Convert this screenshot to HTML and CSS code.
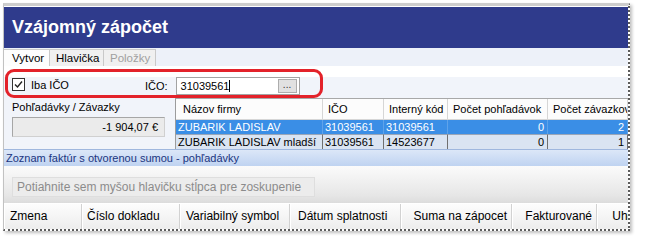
FILE: index.html
```html
<!DOCTYPE html>
<html lang="sk">
<head>
    <meta charset="UTF-8">
    <meta name="viewport" content="width=device-width, initial-scale=1.0">
    <title>Vzájomný zápočet</title>
    <link rel="stylesheet" href="styles.css">
</head>
<body>
    <div class="shot">
        <div class="titlebar">Vzájomný zápočet</div>

        <div class="tabs">
            <span class="tab active">Vytvor</span>
            <span class="tab">Hlavička</span>
            <span class="tab disabled">Položky</span>
        </div>

        <div class="form">
            <div class="filter">
                <label class="check">
                    <span class="box">
                        <svg width="11" height="11" viewBox="0 0 11 11">
                            <path d="M2 5.5 L4.5 8 L9 2.5" fill="none" stroke="#222" stroke-width="1.4"/>
                        </svg>
                    </span>
                    Iba IČO
                </label>
                <span class="ico-label">IČO:</span>
                <div class="input">
                    <span class="value">31039561</span><span class="caret"></span>
                    <span class="dots">...</span>
                </div>
            </div>

            <div class="lower">
                <div class="balance">
                    <div class="balance-label">Pohľadávky / Závazky</div>
                    <div class="balance-box">-1 904,07 €</div>
                </div>

                <div class="firms">
                    <div class="head">Názov firmy</div>
                    <div class="head">IČO</div>
                    <div class="head">Interný kód</div>
                    <div class="head">Počet pohľadávok</div>
                    <div class="head">Počet závazkov</div>

                    <div class="cell sel">ZUBARIK LADISLAV</div>
                    <div class="cell sel">31039561</div>
                    <div class="cell sel">31039561</div>
                    <div class="cell sel num">0</div>
                    <div class="cell sel num">2</div>

                    <div class="cell alt">ZUBARIK LADISLAV mladší</div>
                    <div class="cell alt">31039561</div>
                    <div class="cell alt">14523677</div>
                    <div class="cell alt num">0</div>
                    <div class="cell alt num">1</div>
                </div>
            </div>
        </div>

        <div class="band">Zoznam faktúr s otvorenou sumou - pohľadávky</div>

        <div class="group">
            <div class="group-box">Potiahnite sem myšou hlavičku stĺpca pre zoskupenie</div>
        </div>

        <div class="cols">
            <div class="col c-zmena">Zmena</div>
            <div class="col c-cislo">Číslo dokladu</div>
            <div class="col c-vs">Variabilný symbol</div>
            <div class="col c-datum">Dátum splatnosti</div>
            <div class="col c-suma right">Suma na zápocet</div>
            <div class="col c-fakt right">Fakturované</div>
            <div class="col c-uhr right">Uhradené</div>
        </div>

        <!-- cervene oznacenie -->
        <div class="mark"></div>
    </div>
</body>
</html>
```

FILE: styles.css
```css
body {
    margin: 0;
    padding: 0;
    background: #fff;
    width: 648px;
    height: 245px;
    overflow: hidden;
    font-family: 'Liberation Sans', Arial, sans-serif;
}

.shot {
    position: relative;
    width: 624px;
    margin: 3px 0 0 3px;
    padding-top: 1px;
    border-top: 3px solid #cdcdcd;
    border-left: 1px solid #c2c2c2;
    border-right: 2px dotted #5c5c5c;
    border-bottom: 2px dotted #5c5c5c;
    background: #fff;
    box-shadow: 2px 2px 3px rgba(0,0,0,0.25);
    font-size: 11px;
    color: #000;
    overflow: hidden;
}

.titlebar {
    height: 41px;
    line-height: 41px;
    padding-left: 8px;
    background: #2f3b8c;
    color: #fff;
    font-size: 18px;
    font-weight: bold;
}

.tabs {
    display: flex;
    height: 18px;
    padding-top: 1px;
    box-sizing: border-box;
    background: #edf1f9;
}

.tab {
    box-sizing: border-box;
    height: 17px;
    line-height: 16px;
    font-size: 11.5px;
    background: #f0f0f0;
    border: 1px solid #c9c9c9;
    border-bottom: none;
    border-left: none;
}

.tab:nth-child(1) { width: 46px; padding-left: 8px; }
.tab:nth-child(2) { width: 54px; padding-left: 6px; }
.tab:nth-child(3) { width: 52px; padding-left: 6px; }

.tab.active {
    background: #fdfdfd;
}

.tab.disabled {
    color: #a0a0a0;
}

.form {
    background: #f1f4fa;
}

.filter {
    display: flex;
    align-items: center;
    height: 18px;
    margin-top: 11px;
    margin-bottom: 3px;
    padding-left: 8px;
}

.check {
    display: flex;
    align-items: center;
    margin-top: -3px;
}

.box {
    display: flex;
    align-items: center;
    justify-content: center;
    width: 13px;
    height: 13px;
    box-sizing: border-box;
    border: 1px solid #333;
    background: #fff;
    margin-right: 6px;
}

.ico-label {
    margin-left: 76px;
    margin-top: -1px;
}

.input {
    display: flex;
    align-items: center;
    width: 124px;
    height: 18px;
    box-sizing: border-box;
    margin-left: 8px;
    padding-left: 4px;
    background: #fff;
    border: 1px solid #a3a3a3;
}

.caret {
    width: 1px;
    height: 12px;
    background: #000;
    margin-left: 0;
}

.dots {
    margin-left: auto;
    margin-right: 2px;
    width: 19px;
    height: 14px;
    box-sizing: border-box;
    background: #e1e1e1;
    border: 1px solid #adadad;
    text-align: center;
    line-height: 10px;
    font-size: 10px;
    color: #333;
}

.lower {
    display: flex;
    height: 51px;
}

.balance {
    width: 171px;
    box-sizing: border-box;
    padding: 3px 0 0 8px;
}

.balance-label {
    line-height: 13px;
}

.balance-box {
    width: 153px;
    height: 20px;
    box-sizing: border-box;
    margin-top: 3px;
    padding-right: 6px;
    line-height: 18px;
    text-align: right;
    background: #ebebeb;
    border: 1px solid #a6a6a6;
    border-right-color: #d0d0d0;
    border-bottom-color: #d0d0d0;
}

.firms {
    flex: 1;
    display: grid;
    grid-template-columns: 147px 61px 64px 100px 1fr;
    grid-template-rows: 21px 14px 15px;
    border-left: 1px solid #9c9c9c;
    border-top: 1px solid #a8a8a8;
    white-space: nowrap;
    overflow: hidden;
}

.head {
    background: #fcfcfc;
    border-right: 1px solid #d6d6d6;
    border-bottom: 1px solid #d6d6d6;
    line-height: 20px;
    padding-left: 5px;
    overflow: hidden;
}

.head:first-child {
    padding-left: 7px;
}

.cell {
    line-height: 14px;
    padding-left: 2px;
    overflow: hidden;
}

.cell.num {
    text-align: right;
    padding-right: 3px;
}

.sel {
    background: #3a8ee6;
    color: #fff;
    border-right: 1px solid #5fa3ea;
}

.alt {
    background: #dae4f2;
    border-right: 1px solid #707070;
    border-top: 1px solid #9aa6b8;
}

.band {
    height: 17px;
    box-sizing: border-box;
    line-height: 16px;
    padding-left: 2px;
    color: #1b3580;
    background: linear-gradient(#dce7f8, #bfd3f1);
    border-top: 1px solid #9fb7de;
}

.group {
    height: 37px;
    box-sizing: border-box;
    padding: 11px 0 0 8px;
    background: linear-gradient(#fbfbfb, #e6e6e6 80%, #dcdcdc);
}

.group-box {
    width: 303px;
    height: 20px;
    box-sizing: border-box;
    padding-left: 4px;
    line-height: 18px;
    font-size: 12px;
    color: #8b8b8b;
    background: #ececec;
    border: 1px solid #dedede;
}

.cols {
    display: flex;
    height: 25px;
    font-size: 12px;
    line-height: 25px;
    white-space: nowrap;
    background: linear-gradient(#fdfdfd, #ededed);
    border-top: 1px solid #fff;
}

.col {
    flex: none;
    box-sizing: border-box;
    padding-left: 6px;
    border-right: 1px solid #d2d2d2;
    box-shadow: inset 1px 0 0 #fff;
}

.col.right {
    text-align: right;
    padding-left: 0;
    padding-right: 4px;
}

.c-zmena { width: 78px; }
.c-cislo { width: 98px; padding-left: 5px; }
.c-vs { width: 110px; }
.c-datum { width: 111px; padding-left: 8px; }
.c-suma { width: 111px; }
.c-fakt { width: 85px; }
.c-uhr { width: 73px; }

.mark {
    position: absolute;
    left: 1px;
    top: 63px;
    width: 318px;
    height: 29px;
    box-sizing: border-box;
    border: 3px solid #e3222a;
    border-radius: 9px;
}
```
